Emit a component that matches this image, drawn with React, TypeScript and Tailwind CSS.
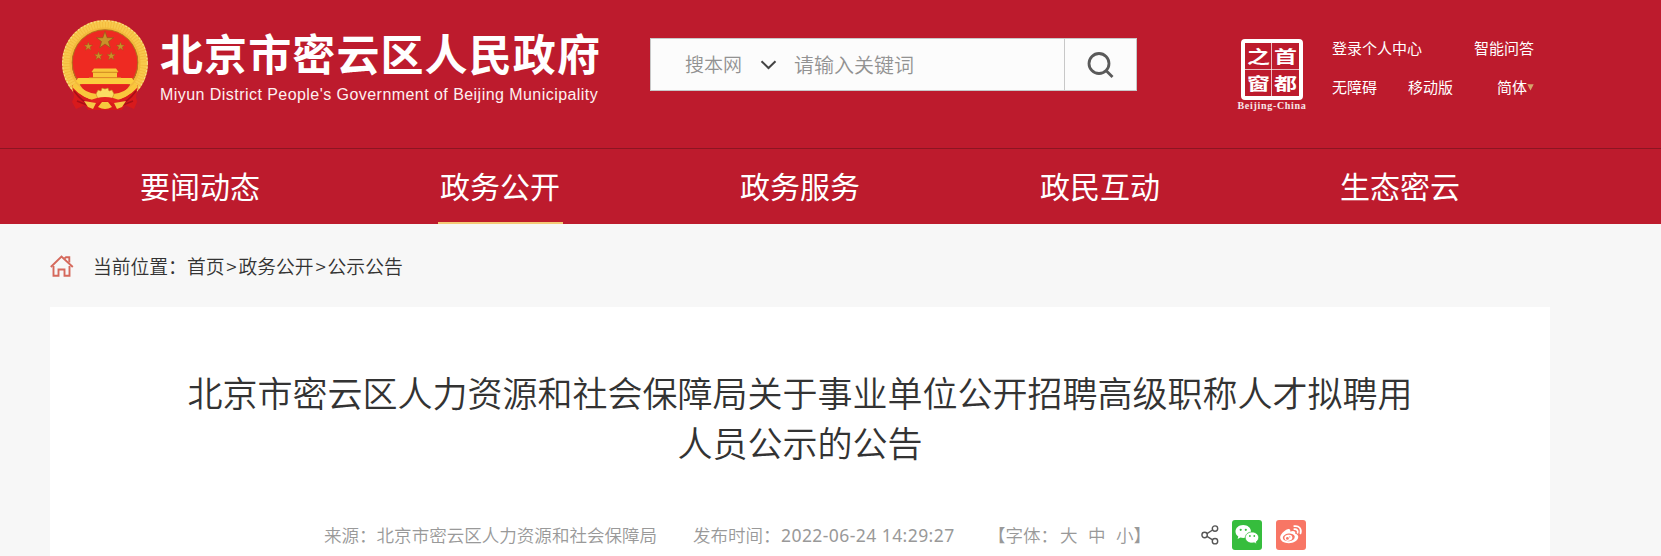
import React from 'react';

const navItems = [
  { title: '要闻动态', active: false },
  { title: '政务公开', active: true },
  { title: '政务服务', active: false },
  { title: '政民互动', active: false },
  { title: '生态密云', active: false },
];

const sealChars = ['之', '首', '窗', '都'];

const smallStars = [
  { x: 28.3, y: 29.5 },
  { x: 60.5, y: 29.5 },
  { x: 38.5, y: 39 },
  { x: 51.2, y: 39 },
];

const starPoints = '0,-10 2.4,-3.1 9.5,-3.1 3.8,1.2 5.9,8.1 0,3.9 -5.9,8.1 -3.8,1.2 -9.5,-3.1 -2.4,-3.1';

function Emblem() {
  return (
    <svg width="90" height="95" viewBox="0 0 90 95">
      <circle cx="45" cy="46" r="38" fill="none" stroke="#f3b93c" strokeWidth="10" />
      <circle cx="45" cy="46" r="42.2" fill="none" stroke="#f8dc86" strokeWidth="1.4" strokeDasharray="2 1.6" />
      <circle cx="45" cy="46" r="38.5" fill="none" stroke="#f8c94c" strokeWidth="6" strokeDasharray="2 0.8" />
      <path d="M12 68 Q22 82 37 84 L53 84 Q68 82 78 68 L76 80 L77 85 L74 92 L65 88 L62 93 L28 93 L25 88 L16 92 L12 85 L14 80 Z" fill="#d81a1c" />
      <path d="M14 74 Q22 85 31 88 M76 74 Q68 85 59 88 M17 84 L27 88 M73 84 L63 88" stroke="#a90f18" strokeWidth="1.5" fill="none" />
      <circle cx="45" cy="45.5" r="32.8" fill="#ee2a22" stroke="#b3761d" strokeWidth="1" />
      <polygon points={starPoints} transform="translate(45 23.5) scale(0.9)" fill="#c99129" stroke="#8c5d17" strokeWidth="0.7" />
      {smallStars.map((star, index) => (
        <polygon key={index} points={starPoints} transform={`translate(${star.x} ${star.y}) scale(0.46)`} fill="#c99129" stroke="#8c5d17" strokeWidth="0.8" />
      ))}
      <path d="M34 51.5 H56 L58.5 55 H57 V60.5 H33 V55 H31.5 Z" fill="#f9c63c" />
      <path d="M32 55.3 H58" stroke="#c8811e" strokeWidth="0.9" />
      <path d="M18 61 H72 L74 64 L71 67 H19 L16 64 Z" fill="#fbcd3e" />
      <path d="M29 60.7 H61" stroke="#d8922a" strokeWidth="0.8" />
      <path d="M20 68 H70 Q65 76 56 79 H34 Q25 76 20 68 Z" fill="#e3231f" />
      <path d="M15 66 Q27 77 37 77 L38 83 Q24 83 12 70 Z M75 66 Q63 77 53 77 L52 83 Q66 83 78 70 Z" fill="#f9c63c" />
      <path d="M36 77 L38 73 L41 74 L42 71 L45 72 L48 71 L49 74 L52 73 L54 77 L52 82 H38 Z" fill="#fbdc62" stroke="#c8811e" strokeWidth="0.6" />
      <path d="M29 84 Q45 76 61 84 L54 87 Q45 81 36 87 Z" fill="#e3231f" />
      <path d="M24 84 L36 86 L33 92 L28 90 Z M66 84 L54 86 L57 92 L62 90 Z" fill="#f6c846" />
      <path d="M38 90 L42 85 H48 L52 90 Q45 94 38 90 Z" fill="#f7c93d" />
    </svg>
  );
}

function Seal() {
  return (
    <div className="flex flex-col items-center w-[70px]">
      <div className="relative grid grid-cols-2 grid-rows-2 w-[62px] h-[61px] border-4 border-white rounded-[4px] text-white text-[23px] leading-[25px] font-bold text-center">
        <div className="absolute left-[26px] top-0 w-px h-full bg-white/70" />
        <div className="absolute top-[26px] left-0 h-px w-full bg-white/70" />
        {sealChars.map((char) => (
          <span key={char} className="scale-y-[0.72]">{char}</span>
        ))}
      </div>
      <p className="text-white/90 text-[10px] leading-[11px] font-bold font-['Liberation_Serif',serif] whitespace-nowrap tracking-[0.7px]">Beijing-China</p>
    </div>
  );
}

function SearchBox() {
  return (
    <div className="flex w-[487px] h-[53px] bg-[#fcfcfc] border border-[#c8c8c8] text-[#929292]">
      <div className="flex items-center w-[413px] pl-[34px] font-[350]">
        <span className="w-[75px] text-[19px]">搜本网</span>
        <svg width="17" height="10" viewBox="0 0 17 10" fill="none" stroke="#444" strokeWidth="2">
          <path d="M1.5 1.2 L8.5 8 L15.5 1.2" />
        </svg>
        <span className="ml-[17px] text-[20px]">请输入关键词</span>
      </div>
      <div className="flex items-center justify-center flex-1 border-l border-[#c8c8c8]">
        <svg width="28" height="28" viewBox="0 0 28 28" fill="none" stroke="#5a5a5a" strokeWidth="2.8">
          <circle cx="12" cy="12.5" r="10" />
          <path d="M19 19.5 L25.5 26" />
        </svg>
      </div>
    </div>
  );
}

function Header() {
  return (
    <header className="bg-[#bd1b2d] text-white">
      <div className="flex h-[148px] pl-[60px]">
        <div className="w-[90px] pt-[17px]">
          <Emblem />
        </div>
        <div className="w-[490px] pl-[10px] pt-[27px] whitespace-nowrap">
          <p className="h-[50px] text-[43px] leading-[50px] font-bold tracking-[1.1px]">北京市密云区人民政府</p>
          <p className="mt-[7px] text-[16px] leading-[22px] tracking-[0.45px] font-['Liberation_Sans',sans-serif] text-[#fdf0f1]">Miyun District People's Government of Beijing Municipality</p>
        </div>
        <div className="ml-[10px] pt-[38px]">
          <SearchBox />
        </div>
        <div className="ml-[100px] pt-[39px]">
          <Seal />
        </div>
        <div className="flex flex-col w-[203px] ml-[25px] pt-[38px] text-[15px] leading-[20px] whitespace-nowrap">
          <div className="flex justify-between pr-[1px]">
            <span>登录个人中心</span>
            <span>智能问答</span>
          </div>
          <div className="flex items-center mt-[19px]">
            <span className="w-[76px]">无障碍</span>
            <span className="w-[89px]">移动版</span>
            <span>简体</span>
            <svg width="7" height="7" viewBox="0 0 7 7">
              <path d="M0.3 0.3 H6.7 L3.5 6.5 Z" fill="#d5a56b" />
            </svg>
          </div>
        </div>
      </div>
      <nav className="flex h-[76px] pl-[50px] border-t border-[#8c1522]">
        {navItems.map((item) => (
          <div key={item.title} className="flex justify-center w-[300px]">
            <span className={item.active ? 'w-[125px] h-[75px] text-center text-[30px] leading-[73px] border-b-2 border-[#f4cb77]' : 'w-[125px] h-[75px] text-center text-[30px] leading-[73px]'}>
              {item.title}
            </span>
          </div>
        ))}
      </nav>
    </header>
  );
}

function Breadcrumb() {
  return (
    <div className="flex items-center h-[83px] pl-[50px] pt-[2px] text-[18.8px] text-[#333] font-[350] whitespace-nowrap">
      <svg className="mb-[2px]" width="24" height="22" viewBox="0 0 24 22" fill="none" stroke="#d5695c" strokeWidth="1.9">
        <path d="M0.8 12 L11.5 1.5 L22.8 12" />
        <path d="M3.5 11 V20.7 H8.5 V14.5 H14.5 V20.7 H19.5 V11" />
        <path d="M14.5 3.5 L16 2.3 H19.3 V7.5" />
      </svg>
      <span className="ml-[19px]">当前位置：</span>
      <span>首页</span>
      <span className="w-[14px] text-center">&gt;</span>
      <span>政务公开</span>
      <span className="w-[14px] text-center">&gt;</span>
      <span>公示公告</span>
    </div>
  );
}

function ShareIcons() {
  return (
    <div className="flex items-center">
      <svg width="18" height="20" viewBox="0 0 18 20" fill="none" stroke="#555" strokeWidth="1.4">
        <circle cx="3.6" cy="10" r="2.7" />
        <circle cx="14" cy="3.6" r="2.7" />
        <circle cx="14" cy="16.2" r="2.7" />
        <path d="M6 8.6 L11.6 5 M6 11.4 L11.6 14.8" />
      </svg>
      <div className="flex items-center justify-center w-[30px] h-[30px] ml-[13px] rounded-[3px] bg-[#36bd3d]">
        <svg width="24" height="22" viewBox="0 0 24 22">
          <path d="M8.2 1 C3.8 1 0.5 3.9 0.5 7.5 C0.5 9.6 1.6 11.4 3.3 12.6 L2.6 15 L5.5 13.6 C6.4 13.9 7.3 14 8.2 14 C12.6 14 16 11.1 16 7.5 C16 3.9 12.6 1 8.2 1 Z" fill="#fff" />
          <path d="M17 8 C13 8 10.3 10.5 10.3 13.6 C10.3 16.7 13.2 19.1 17 19.1 C17.8 19.1 18.5 19 19.2 18.8 L21.6 20.2 L21.1 18 C22.7 17 23.7 15.4 23.7 13.6 C23.7 10.5 20.8 8 17 8 Z" fill="#fff" stroke="#36bd3d" strokeWidth="0.8" />
          <g fill="#36bd3d">
            <circle cx="5.7" cy="5.8" r="1.1" />
            <circle cx="10.8" cy="5.8" r="1.1" />
            <circle cx="14.9" cy="12" r="0.9" />
            <circle cx="19.3" cy="12" r="0.9" />
          </g>
        </svg>
      </div>
      <div className="flex items-center justify-center w-[30px] h-[30px] ml-[14px] rounded-[3px] bg-[#f87665]">
        <svg width="24" height="22" viewBox="0 0 24 22" fill="none">
          <path d="M8.5 5.3 C10.5 4.5 11.8 5.5 11.2 7.6 C14 6.4 17 6.8 16.2 9.8 C18.5 10.4 19.6 11.7 19.2 13.6 C18.6 16.9 14.6 19.2 9.8 19.2 C5 19.2 1.2 17 1.2 13.5 C1.2 10.7 5 6.6 8.5 5.3 Z" fill="#fff" />
          <ellipse cx="9.8" cy="13.4" rx="6" ry="3.8" transform="rotate(-6 9.8 13.4)" fill="#f87665" />
          <ellipse cx="9.4" cy="13.8" rx="4" ry="3" transform="rotate(-10 9.4 13.8)" fill="#fff" />
          <circle cx="8.4" cy="14.4" r="1.4" fill="#f87665" />
          <circle cx="10.8" cy="12.9" r="0.6" fill="#f87665" />
          <path d="M15.3 5.2 C17.8 4.9 19.3 6.6 18.6 8.8 M15.2 2.2 C19.9 1.3 23 4.8 21.5 9.5" stroke="#fff" strokeWidth="1.7" strokeLinecap="round" />
        </svg>
      </div>
    </div>
  );
}

function Article() {
  return (
    <main className="w-[1500px] h-[249px] ml-[50px] pt-[60px] bg-white overflow-hidden">
      <h1 className="h-[100px] text-center text-[35px] leading-[50px] text-[#333] font-[350] whitespace-nowrap">
        北京市密云区人力资源和社会保障局关于事业单位公开招聘高级职称人才拟聘用
        <br />
        人员公示的公告
      </h1>
      <div className="flex items-center h-[30px] mt-[53px] pl-[274px] text-[17.55px] text-[#999] font-[350] whitespace-nowrap">
        <span className="w-[369px]">来源：北京市密云区人力资源和社会保障局</span>
        <span className="w-[88px]">发布时间：</span>
        <span className="w-[207px] tracking-[0.42px] font-normal font-['Noto_Sans','Noto_Sans_CJK_SC',sans-serif]">2022-06-24 14:29:27</span>
        <span className="w-[72px]">【字体：</span>
        <span className="w-[28px]">大</span>
        <span className="w-[28px]">中</span>
        <span className="w-[85px]">小】</span>
        <ShareIcons />
      </div>
    </main>
  );
}

export default function App() {
  return (
    <div className="w-[1661px] h-[556px] overflow-hidden bg-[#f7f7f7] font-['Noto_Sans_CJK_SC',sans-serif]">
      <Header />
      <Breadcrumb />
      <Article />
    </div>
  );
}
